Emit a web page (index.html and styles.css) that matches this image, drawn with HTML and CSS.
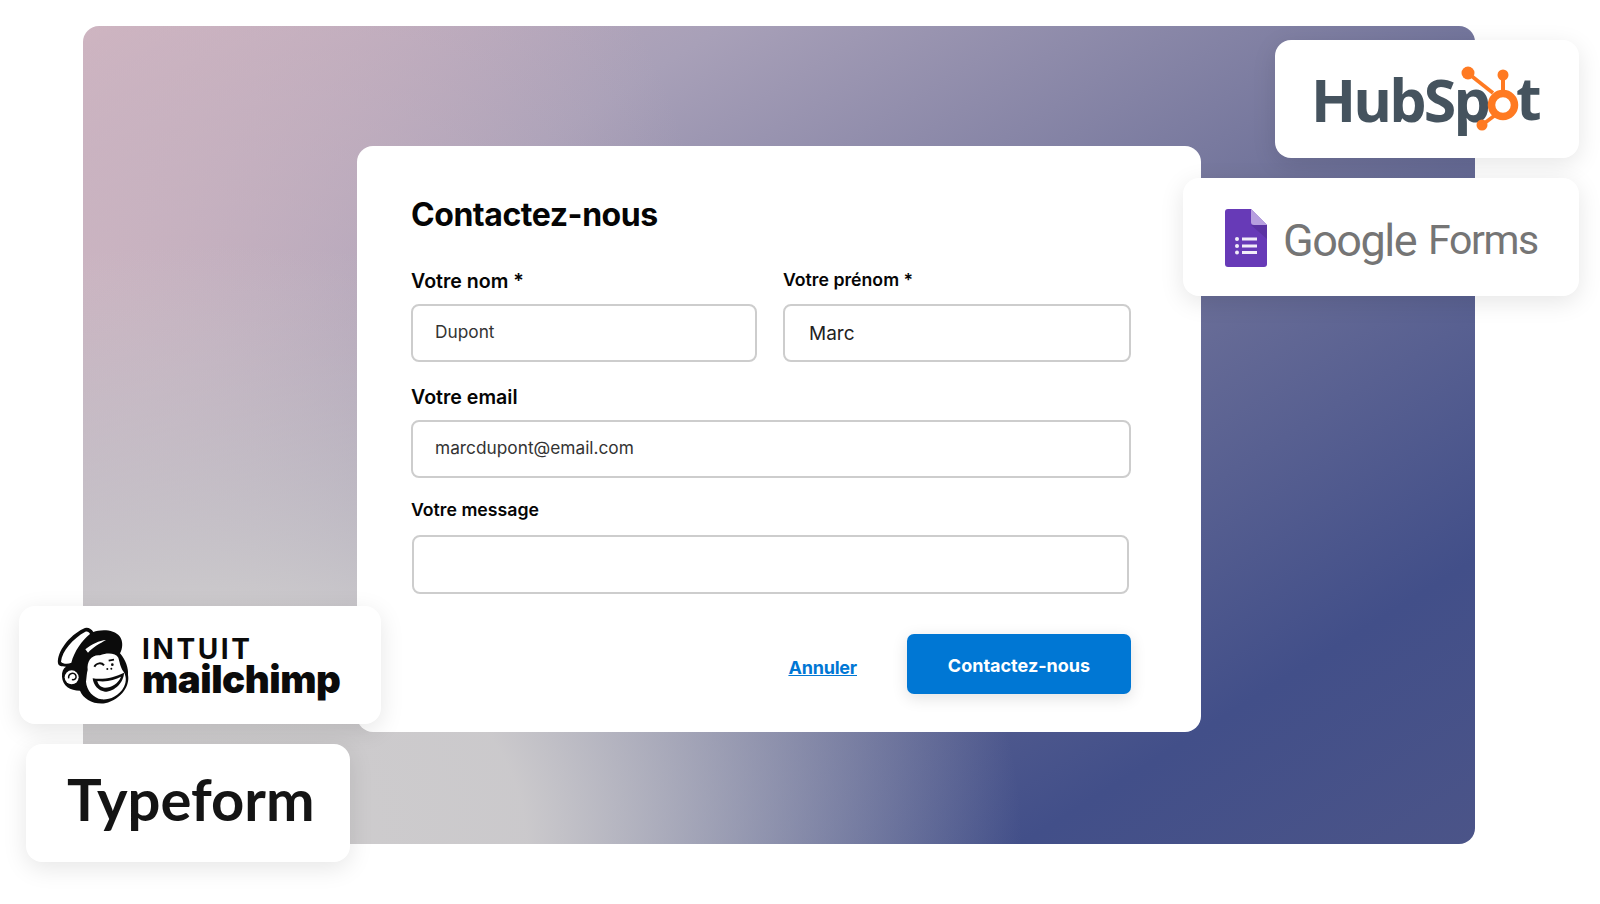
FILE: index.html
```html
<!DOCTYPE html>
<html lang="fr">

<head>
    <meta charset="UTF-8">
    <meta name="viewport" content="width=device-width, initial-scale=1.0">
    <title>Contactez-nous</title>
    <link rel="stylesheet" href="styles.css">
</head>

<body>

    <div class="stage">
        <div class="panel">
            <div class="container">
                <h1>Contactez-nous</h1>

                <form class="contact-form">
                    <div class="form-row">
                        <div class="form-group group-nom">
                            <label class="label-big" for="nom">Votre nom *</label>
                            <input class="input-small" type="text" id="nom" value="Dupont">
                        </div>
                        <div class="form-group group-prenom">
                            <label for="prenom">Votre prénom *</label>
                            <input type="text" id="prenom" value="Marc">
                        </div>
                    </div>

                    <div class="form-group group-email">
                        <label class="label-big" for="email">Votre email</label>
                        <input class="input-small" type="text" id="email" value="marcdupont@email.com">
                    </div>

                    <div class="form-group group-message">
                        <label for="message">Votre message</label>
                        <input type="text" id="message">
                    </div>

                    <div class="form-actions">
                        <a class="cancel" href="#">Annuler</a>
                        <button type="button">Contactez-nous</button>
                    </div>
                </form>
            </div>
        </div>

        <!-- logos posés par-dessus le panneau -->
        <div class="logo-card hubspot">
            <span class="hs-text">HubSp</span>
            <svg class="hs-sprocket" viewBox="0 0 90 80" width="90" height="80">
                <g fill="#ff7a22">
                    <circle cx="13" cy="13" r="6.5"/>
                    <circle cx="48" cy="15" r="5.5"/>
                    <circle cx="27" cy="65" r="5.5"/>
                </g>
                <g stroke="#ff7a22" fill="none">
                    <path d="M14 14 L38 33" stroke-width="3.6"/>
                    <path d="M48 18 V32" stroke-width="4"/>
                    <path d="M27 65 L39 56" stroke-width="3.6"/>
                    <circle cx="48" cy="45" r="11.5" stroke-width="7.5"/>
                </g>
            </svg>
            <span class="hs-text hs-t">t</span>
        </div>

        <div class="logo-card gforms">
            <svg class="gf-icon" viewBox="0 0 42 58" width="42" height="58">
                <path d="M3 0 H26 L42 16 V55 a3 3 0 0 1 -3 3 H3 a3 3 0 0 1 -3 -3 V3 a3 3 0 0 1 3 -3 Z" fill="#673ab7"/>
                <path d="M26 16 L42 30 V16 Z" fill="#5b33a3"/>
                <path d="M26 0 L42 16 H29 a3 3 0 0 1 -3 -3 Z" fill="#b79fdf"/>
                <g fill="#f1ecf8">
                    <circle cx="12" cy="30" r="2"/>
                    <circle cx="12" cy="37" r="2"/>
                    <circle cx="12" cy="43.5" r="2"/>
                    <rect x="17" y="28.5" width="15" height="3"/>
                    <rect x="17" y="35.5" width="15" height="3"/>
                    <rect x="17" y="42" width="15" height="3"/>
                </g>
            </svg>
            <span class="gf-google">Google</span>
            <span class="gf-forms">Forms</span>
        </div>

        <div class="logo-card mailchimp">
            <svg class="mc-head" viewBox="0 0 270 270" width="90" height="90">
                <path d="M24 130 C20 95 58 46 100 26 C112 20 124 26 130 36 C150 28 192 26 210 50 C220 65 218 85 210 100 C227 120 236 145 234 165 C240 195 217 237 165 250 C130 254 100 237 90 212 C60 212 38 197 36 170 C35 155 40 145 48 140 C34 140 26 138 24 130 Z" fill="#0b0b0b"/>
                <path d="M33 125 C36 93 68 56 106 35 C112 33 118 36 120 42 C97 60 72 95 64 128 C54 133 38 132 33 125 Z" fill="#fff"/>
                <path d="M106 88 C125 72 148 62 168 60 C150 70 128 82 114 98 Z" fill="#fff"/>
                <path d="M113 150 C110 123 125 103 150 106 C170 98 197 98 205 113 C210 130 210 135 217 150 C230 165 230 185 222 200 C207 230 175 240 155 238 C130 234 110 212 108 185 C110 170 110 160 113 150 Z" fill="#fff"/>
                <path d="M133 140 C140 128 155 127 162 136" stroke="#0b0b0b" stroke-width="6" fill="none"/>
                <path d="M176 122 L192 119" stroke="#0b0b0b" stroke-width="5" fill="none"/>
                <circle cx="187" cy="134" r="4" fill="#0b0b0b"/>
                <circle cx="172" cy="147" r="3" fill="#0b0b0b"/>
                <circle cx="184" cy="146" r="3" fill="#0b0b0b"/>
                <path d="M128 175 C160 180 195 172 222 158 C222 185 195 215 165 215 C145 213 130 195 128 175 Z" fill="#0b0b0b"/>
                <path d="M142 183 C170 187 195 180 213 170 C205 190 185 203 165 203 C152 202 145 195 142 183 Z" fill="#fff"/>
                <circle cx="65" cy="172" r="21" fill="#fff"/>
                <path d="M56 175 C54 160 74 154 78 168 C80 176 72 182 66 178" stroke="#0b0b0b" stroke-width="4.5" fill="none"/>
            </svg>
            <div class="mc-text">
                <span class="mc-intuit">INTUIT</span>
                <span class="mc-name">mailchimp</span>
            </div>
        </div>

        <div class="logo-card typeform">Typeform</div>
    </div>

</body>

</html>
```

FILE: styles.css
```css
/* Reset some default styles */
* {
    margin: 0;
    padding: 0;
    box-sizing: border-box;
}

body {
    font-family: 'Inter', sans-serif;
    background-color: #ffffff;
    color: #000;
    overflow: hidden;
}

.stage {
    position: relative;
    width: 1600px;
    height: 904px;
    padding: 26px 0 0 83px;
}

.panel {
    width: 1392px;
    height: 818px;
    padding: 120px 0 0 274px;
    border-radius: 16px;
    background-image:
        radial-gradient(800px 600px at 10% 100%, #cfcdce 0%, rgba(207, 205, 206, 0.96) 38%, rgba(207, 205, 206, 0) 100%),
        radial-gradient(620px 560px at 0% 30%, rgba(206, 182, 194, 0.85) 0%, rgba(206, 182, 194, 0) 100%),
        linear-gradient(148deg, #ceb3c0 0px, #a8a0b8 340px, #6e7199 780px, #424f89 1190px, #4b5488 1432px);
}

.container {
    width: 844px;
    height: 586px;
    padding: 50px 70px 0 54px;
    background-color: #ffffff;
    border-radius: 16px;
}

h1 {
    font-size: 32px;
    font-weight: 700;
    line-height: 38px;
    letter-spacing: -0.45px;
    color: #050505;
    margin-bottom: 36px;
}

.form-row {
    display: flex;
    gap: 26px;
}

.group-nom {
    width: 346px;
}

.group-prenom {
    width: 348px;
}

.form-group label {
    display: block;
    font-size: 17.7px;
    font-weight: 600;
    line-height: 24px;
    color: #050505;
}

.group-prenom label {
    margin-top: -2px;
}

.form-group .label-big {
    margin-top: -1px;
    font-size: 19.6px;
}

.form-group input {
    display: block;
    width: 100%;
    height: 58px;
    margin-top: 12px;
    padding: 0 24px;
    font-family: 'Inter', sans-serif;
    font-size: 19px;
    color: #222;
    background-color: #fff;
    border: 2px solid #cdcdcd;
    border-radius: 8px;
}

.form-group .input-small {
    margin-top: 11px;
    padding: 0 22px 3px;
    font-size: 17.3px;
    color: #333;
}

.group-email {
    margin-top: 24px;
}

.group-message {
    margin-top: 20px;
}

.group-message input {
    width: 717px;
    height: 59px;
    margin: 13px 0 0 1px;
}

.form-actions {
    display: flex;
    justify-content: flex-end;
    align-items: center;
    gap: 50px;
    margin-top: 40px;
}

.cancel {
    font-size: 18px;
    font-weight: 700;
    letter-spacing: -0.2px;
    color: #0077d4;
    margin-top: 7px;
}

button {
    width: 224px;
    height: 60px;
    padding-top: 2px;
    font-family: 'Inter', sans-serif;
    font-size: 18px;
    font-weight: 700;
    color: #fff;
    background-color: #0077d4;
    border: none;
    border-radius: 7px;
    box-shadow: 0 4px 16px rgba(0, 0, 0, 0.12);
}

/* Logos */
.logo-card {
    position: absolute;
    height: 118px;
    background-color: #fff;
    border-radius: 16px;
    box-shadow: 0 6px 24px rgba(0, 0, 0, 0.1);
    display: flex;
    align-items: center;
}

.hubspot {
    left: 1275px;
    top: 40px;
    width: 304px;
    padding-left: 36px;
}

.hs-text {
    font-family: 'Open Sans', sans-serif;
    font-size: 59px;
    font-weight: 700;
    letter-spacing: -2.8px;
    color: #45535e;
}

.hs-sprocket {
    position: absolute;
    left: 180px;
    top: 20px;
}

.hs-t {
    position: absolute;
    left: 241px;
    top: 17px;
}

.gforms {
    left: 1183px;
    top: 178px;
    width: 396px;
    padding-left: 42px;
}

.gf-icon {
    margin: 2px 16px 0 0;
}

.gf-google,
.gf-forms {
    font-family: 'Roboto', sans-serif;
    font-size: 45px;
    color: #757575;
    letter-spacing: -1.5px;
    margin-top: 6px;
}

.gf-forms {
    margin-left: 12px;
    font-size: 41px;
    letter-spacing: -1.4px;
}

.mailchimp {
    left: 19px;
    top: 606px;
    width: 362px;
    padding-left: 31px;
}

.mc-text {
    margin-left: 2px;
}

.mc-text span {
    display: block;
    color: #0b0b0b;
}

.mc-intuit {
    font-size: 28px;
    font-weight: 700;
    line-height: 28px;
    letter-spacing: 2.6px;
}

.mc-name {
    font-size: 38.5px;
    font-weight: 900;
    line-height: 32px;
    letter-spacing: -0.5px;
}

.typeform {
    left: 26px;
    top: 744px;
    width: 324px;
    padding: 0 0 10px 41px;
    font-family: 'Lato', sans-serif;
    font-size: 58px;
    font-weight: 700;
    color: #141414;
}
```
